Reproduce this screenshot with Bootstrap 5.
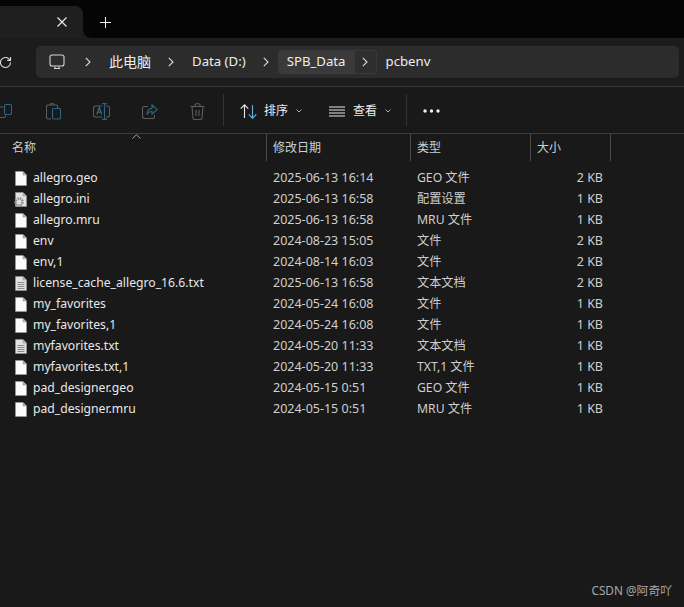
<!DOCTYPE html>
<html lang="zh-CN">
  <head>
    <meta charset="UTF-8" />
    <meta name="viewport" content="width=device-width, initial-scale=1.0" />
    <title>pcbenv</title>
    <link
      href="https://cdn.jsdelivr.net/npm/bootstrap@5.3.1/dist/css/bootstrap.min.css"
      rel="stylesheet"
    />
    <style>
      html, body { height: 100%; }
      body {
        background: #191919;
        color: #e4e4e4;
        font-family: "Noto Sans", "Noto Sans CJK SC", sans-serif;
        font-size: 12.2px;
        overflow: hidden;
      }
      .win-shell { width: 684px; height: 607px; overflow: hidden; }
      .tab-strip { height: 38px; background: #050505; padding-top: 6px; }
      .tab-active {
        width: 83px; height: 32px; background: #1f1f1f; position: relative;
        border-radius: 0 8px 0 0; padding: 0 16px 0 0;
      }
      .tab-active::after {
        content: ""; position: absolute; left: 100%; bottom: 0; width: 8px; height: 8px;
        background: radial-gradient(circle at 100% 0, transparent 7.5px, #1c1c1c 8px);
      }
      .tab-new { margin: 0 0 0 17px; }
      .addr-row { height: 49px; background: #1c1c1c; border-bottom: 1px solid #3a3a3a; padding: 8px 5px 0 0; }
      .refresh-btn { height: 32px; margin-left: -30px; flex: 0 0 66px; padding-left: 29px; }
      .addr-box {
        width: 643px; height: 32px; background: #2c2c2c; border-radius: 5px;
        font-size: 13.2px; color: #ededed; padding-left: 13px;
      }
      .cjk-crumb { font-size: 14px; margin-top: -2px; }
      .crumb-sep { margin: 0 18px 0 17px; }
      .crumb-hit {
        background: #3a3a3a; height: 24px; border-radius: 4px 0 0 4px; padding: 0 9px; margin-left: -9px;
      }
      .crumb-arrow {
        width: 22px; height: 24px; background: #2e2e2e; border: 1px solid #3a3a3a; border-left: 0;
        border-radius: 0 4px 4px 0; margin-right: 9px;
      }
      .tool-row { height: 47px; border-bottom: 1px solid #3c3c3c; font-size: 12px; color: #ececec; padding-top: 2px; }
      .tool-icon { flex: 0 0 auto; }
      .tool-label { margin-left: 7px; }
      .tool-sep { width: 1px; height: 32px; background: #333; margin-top: -2px; }
      .head-row { height: 28px; color: #c6d2da; font-size: 12px; position: relative; }
      .sort-caret { position: absolute; left: 132px; top: 0; }
      .col-name { width: 267px; padding-left: 12px; }
      .col-date { width: 144px; padding-left: 6px; }
      .col-kind { width: 120px; padding-left: 6px; }
      .col-size { width: 80px; padding-left: 6px; }
      .head-cell { height: 27px; border-right: 1px solid #4a4a4a; }
      .file-list { padding-top: 6px; color: #dcdcdc; }
      .file-row { height: 21px; }
      .file-name { width: 267px; padding-left: 15px; color: #e8e8e8; gap: 6px; }
      .file-date { width: 144px; padding-left: 6px; color: #cfcfcf; font-size: 12.5px; }
      .file-kind { width: 120px; padding-left: 6px; color: #cfcfcf; }
      .file-size { width: 72px; text-align: right; color: #cfcfcf; font-size: 12.5px; }
      .watermark { position: absolute; right: 12px; bottom: 7px; color: #a8a8a8; font-size: 11.8px; }
    </style>
  </head>
  <body>
    <div class="win-shell position-relative d-flex flex-column">
      <div class="tab-strip d-flex">
        <div class="tab-active d-flex align-items-center justify-content-end">
          <svg width="10" height="10" viewBox="0 0 10 10"><path d="M.5.5l9 9M9.5.5l-9 9" stroke="#f0f0f0" stroke-width="1.1"/></svg>
        </div>
        <div class="tab-new d-flex align-items-center">
          <svg width="11" height="11" viewBox="0 0 11 11"><path d="M5.5 0v11M0 5.5h11" stroke="#f0f0f0" stroke-width="1"/></svg>
        </div>
      </div>

      <div class="addr-row d-flex">
        <div class="refresh-btn d-flex align-items-center">
          <svg width="13" height="13" viewBox="0 0 13 13" fill="none" stroke="#dcdcdc" stroke-width="1.1"><path d="M11.5 6.5a5 5 0 1 1-1.6-3.7L11.5 4.4"/><path d="M11.5 1v3.4H8.2"/></svg>
        </div>
        <div class="addr-box d-flex align-items-center">
          <svg width="16" height="16" viewBox="0 0 16 16" fill="none" stroke="#d6d6d6" stroke-width="1.1"><rect x="1" y="1" width="14" height="11" rx="2"/><path d="M5 14.5h6M6 12.5v2M10 12.5v2"/></svg>
          <svg class="crumb-sep" style="margin-left:20px" width="6" height="10" viewBox="0 0 6 10" fill="none" stroke="#dcdcdc" stroke-width="1.1"><path d="M.8.8 5 5 .8 9.2"/></svg>
          <span class="cjk-crumb">此电脑</span>
          <svg class="crumb-sep" width="6" height="10" viewBox="0 0 6 10" fill="none" stroke="#dcdcdc" stroke-width="1.1"><path d="M.8.8 5 5 .8 9.2"/></svg>
          <span>Data (D:)</span>
          <svg class="crumb-sep" width="6" height="10" viewBox="0 0 6 10" fill="none" stroke="#dcdcdc" stroke-width="1.1"><path d="M.8.8 5 5 .8 9.2"/></svg>
          <span class="crumb-hit d-flex align-items-center">SPB_Data</span>
          <span class="crumb-arrow d-flex align-items-center justify-content-center">
            <svg width="6" height="10" viewBox="0 0 6 10" fill="none" stroke="#dcdcdc" stroke-width="1.1"><path d="M.8.8 5 5 .8 9.2"/></svg>
          </span>
          <span>pcbenv</span>
        </div>
      </div>

      <div class="tool-row d-flex align-items-center">
        <svg class="tool-icon" style="margin-left:-4px" width="16" height="16" viewBox="0 0 16 16" fill="none" stroke-width="1.1"><path d="M7.500 4H2.500v10.500h5.500a1.500 1.500 0 0 0 1.500-1.500v-1" stroke="#5c5c5c"/><rect x="8.500" y="1.500" width="7" height="10" rx="1.500" stroke="#2f6483"/></svg>
        <svg class="tool-icon" style="margin-left:34px" width="15" height="17" viewBox="0 0 15 17" fill="none" stroke-width="1.1"><path d="M5 16H2a1.500 1.500 0 0 1-1.500-1.500V3.500A1.500 1.500 0 0 1 2 2h8a1.500 1.500 0 0 1 1.500 1.500V5M4 2c0-1 .8-1.500 2-1.500S8 1 8 2" stroke="#5c5c5c"/><rect x="6.500" y="5.500" width="8" height="10.500" rx="1.200" stroke="#2f6483"/></svg>
        <svg class="tool-icon" style="margin-left:32px" width="17" height="17" viewBox="0 0 17 17" fill="none" stroke-width="1.1"><path d="M9 3H2.500a2 2 0 0 0-2 2v7a2 2 0 0 0 2 2H9M13 3h1.500a2 2 0 0 1 2 2v7a2 2 0 0 1-2 2H13" stroke="#5c5c5c"/><path d="M3.800 11.500l2.500-7 2.500 7M4.700 9.300h3.200" stroke="#3e6f8c"/><path d="M9.200.6h4.600M11.500.6v15.800M9.200 16.400h4.600" stroke="#2f6483"/></svg>
        <svg class="tool-icon" style="margin-left:32px" width="16" height="15" viewBox="0 0 16 15" fill="none" stroke-width="1.1"><path d="M6 2.500H2.500a2 2 0 0 0-2 2v8a2 2 0 0 0 2 2h8a2 2 0 0 0 2-2V11" stroke="#5c5c5c"/><path d="M10 .8 15.300 5.500l-5.300 4.700V7.500c-2.500 0-4 1-5 3.300 0-4 2-6 5-6.400z" stroke="#2f6483"/></svg>
        <svg class="tool-icon" style="margin-left:32px" width="15" height="17" viewBox="0 0 15 17" fill="none" stroke="#5c5c5c" stroke-width="1.1"><path d="M.5 3.500h14M5 3.500V2a1.200 1.200 0 0 1 1.200-1.200h2.600A1.200 1.200 0 0 1 10 2v1.500M2 3.500l1 11.500a1.500 1.500 0 0 0 1.500 1.500h6a1.500 1.500 0 0 0 1.500-1.500l1-11.500M6 7v6M9 7v6"/></svg>
        <div class="tool-sep" style="margin-left:18px"></div>
        <svg class="tool-icon" style="margin-left:16px" width="17" height="15" viewBox="0 0 17 15" fill="none" stroke-width="1.1"><path d="M4.500 14V.8M.7 4.600 4.500.8l3.800 3.800" stroke="#e8e8e8"/><path d="M12.500 1v13.200M8.700 10.400l3.800 3.800 3.800-3.800" stroke="#5fb4e8"/></svg>
        <span class="tool-label">排序</span>
        <svg class="ms-2" width="6" height="4" viewBox="0 0 6 4" fill="none" stroke="#b0b0b0"><path d="M.5.5 3 3 5.500.5"/></svg>
        <svg class="tool-icon" style="margin-left:27px" width="16" height="11" viewBox="0 0 16 11" stroke="#e8e8e8" stroke-width="1.1"><path d="M0 1h16M0 4h16M0 7h16M0 10h16"/></svg>
        <span class="ms-2">查看</span>
        <svg class="ms-2" width="6" height="4" viewBox="0 0 6 4" fill="none" stroke="#b0b0b0"><path d="M.5.5 3 3 5.500.5"/></svg>
        <div class="tool-sep" style="margin-left:15px"></div>
        <svg class="tool-icon" style="margin-left:16px" width="17" height="4" viewBox="0 0 17 4" fill="#f0f0f0"><circle cx="2" cy="2" r="1.700"/><circle cx="8.500" cy="2" r="1.700"/><circle cx="15" cy="2" r="1.700"/></svg>
      </div>

      <div class="head-row d-flex">
        <svg class="sort-caret" width="9" height="5" viewBox="0 0 9 5" fill="none" stroke="#a0a0a0"><path d="M.5 4.500 4.500.7l4 3.800"/></svg>
        <div class="head-cell col-name d-flex align-items-center">名称</div>
        <div class="head-cell col-date d-flex align-items-center">修改日期</div>
        <div class="head-cell col-kind d-flex align-items-center">类型</div>
        <div class="head-cell col-size d-flex align-items-center">大小</div>
      </div>

      <div class="file-list" id="fileList"></div>

      <div class="watermark">CSDN @阿奇吖</div>
    </div>

    <script>
      const files = [
        ["allegro.geo", "2025-06-13 16:14", "GEO 文件", "2 KB", "blank"],
        ["allegro.ini", "2025-06-13 16:58", "配置设置", "1 KB", "gear"],
        ["allegro.mru", "2025-06-13 16:58", "MRU 文件", "1 KB", "blank"],
        ["env", "2024-08-23 15:05", "文件", "2 KB", "blank"],
        ["env,1", "2024-08-14 16:03", "文件", "2 KB", "blank"],
        ["license_cache_allegro_16.6.txt", "2025-06-13 16:58", "文本文档", "2 KB", "text"],
        ["my_favorites", "2024-05-24 16:08", "文件", "1 KB", "blank"],
        ["my_favorites,1", "2024-05-24 16:08", "文件", "1 KB", "blank"],
        ["myfavorites.txt", "2024-05-20 11:33", "文本文档", "1 KB", "text"],
        ["myfavorites.txt,1", "2024-05-20 11:33", "TXT,1 文件", "1 KB", "blank"],
        ["pad_designer.geo", "2024-05-15 0:51", "GEO 文件", "1 KB", "blank"],
        ["pad_designer.mru", "2024-05-15 0:51", "MRU 文件", "1 KB", "blank"],
      ];

      function fileIcon(kind) {
        let fill = kind === "blank" ? "#fbfbfb" : "#e2e2e2";
        let extra = "";
        if (kind === "text") {
          extra = '<path d="M2.500 6.500h7M2.500 8.500h7M2.500 10.500h7M2.500 12.500h7" stroke="#8a8a8a"/>';
        }
        if (kind === "gear") {
          extra = '<circle cx="4" cy="10" r="3.500" fill="none" stroke="#8c8c8c" stroke-width="2.600" stroke-dasharray="1.500 .9"/><circle cx="4" cy="10" r="1.100" fill="#dcdcdc"/>';
        }
        return `<svg width="12" height="15" viewBox="0 0 12 15" class="flex-shrink-0 overflow-visible">
          <path d="M.5.500h7.500l3.500 3.500v10.500h-11z" fill="${fill}" stroke="#a0a0a0" stroke-width=".5"/>
          <path d="M8 .500v3.500h3.500" fill="#b8b8b8" stroke="#8a8a8a" stroke-width=".5"/>${extra}</svg>`;
      }

      const fileList = document.getElementById("fileList");
      for (let i = 0; i < files.length; i++) {
        const f = files[i];
        fileList.innerHTML += `<div class="file-row d-flex align-items-center">
          <div class="file-name d-flex align-items-center">${fileIcon(f[4])}<span>${f[0]}</span></div>
          <div class="file-date">${f[1]}</div>
          <div class="file-kind">${f[2]}</div>
          <div class="file-size">${f[3]}</div>
        </div>`;
      }
    </script>
  </body>
</html>
